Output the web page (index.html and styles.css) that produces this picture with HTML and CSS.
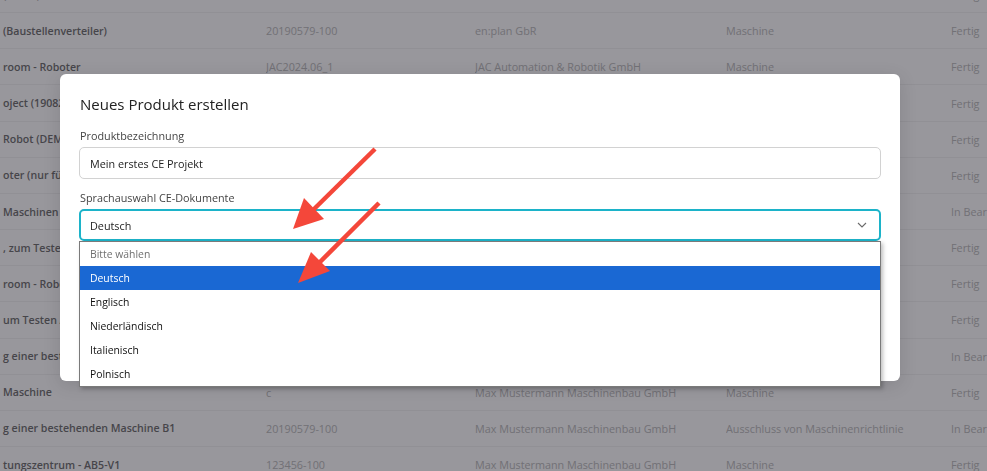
FILE: index.html
```html
<!DOCTYPE html>
<html>
<head>
    <title>Produkte</title>
    <link rel="stylesheet" href="styles.css">
</head>
<body>
    <div class="table">
        <div class="row"><span class="name">(Demo)</span><span></span><span></span><span></span><span>Fertig</span></div>
        <div class="row"><span class="name">(Baustellenverteiler)</span><span>20190579-100</span><span>en:plan GbR</span><span>Maschine</span><span>Fertig</span></div>
        <div class="row"><span class="name">room - Roboter</span><span>JAC2024.06_1</span><span>JAC Automation &amp; Robotik GmbH</span><span>Maschine</span><span>Fertig</span></div>
        <div class="row"><span class="name">oject (19082</span><span></span><span></span><span></span><span>Fertig</span></div>
        <div class="row"><span class="name">Robot (DEMO</span><span></span><span></span><span></span><span>Fertig</span></div>
        <div class="row"><span class="name">oter (nur für</span><span></span><span></span><span></span><span>Fertig</span></div>
        <div class="row"><span class="name"> Maschinen</span><span></span><span></span><span></span><span>In Bearbeitung</span></div>
        <div class="row"><span class="name">, zum Testen</span><span></span><span></span><span></span><span>Fertig</span></div>
        <div class="row"><span class="name">room - Robo</span><span></span><span></span><span></span><span>Fertig</span></div>
        <div class="row"><span class="name">um Testen /</span><span></span><span></span><span></span><span>Fertig</span></div>
        <div class="row"><span class="name">g einer beste</span><span></span><span></span><span></span><span>In Bearbeitung</span></div>
        <div class="row"><span class="name"> Maschine</span><span>c</span><span>Max Mustermann Maschinenbau GmbH</span><span>Maschine</span><span>Fertig</span></div>
        <div class="row"><span class="name">g einer bestehenden Maschine B1</span><span>20190579-100</span><span>Max Mustermann Maschinenbau GmbH</span><span>Ausschluss von Maschinenrichtlinie</span><span>In Bearbeitung</span></div>
        <div class="row"><span class="name">tungszentrum - AB5-V1</span><span>123456-100</span><span>Max Mustermann Maschinenbau GmbH</span><span>Maschine</span><span>Fertig</span></div>
    </div>

    <div class="backdrop"></div>

    <div class="modal-layer">
        <div class="modal">
            <h2 class="modal-title">Neues Produkt erstellen</h2>
            <label class="field-label" for="productName">Produktbezeichnung</label>
            <input class="text-input" id="productName" type="text" value="Mein erstes CE Projekt">
            <label class="field-label">Sprachauswahl CE-Dokumente</label>
            <div class="select-wrap">
                <div class="select">
                    <span>Deutsch</span>
                    <svg class="chevron" width="10" height="6" viewBox="0 0 10 6">
                        <polyline points="1,1 5,5 9,1" fill="none" stroke="#6b6b6b" stroke-width="1.1"/>
                    </svg>
                </div>
                <ul class="options">
                    <li class="placeholder">Bitte wählen</li>
                    <li class="selected">Deutsch</li>
                    <li>Englisch</li>
                    <li>Niederländisch</li>
                    <li>Italienisch</li>
                    <li>Polnisch</li>
                </ul>
            </div>
        </div>
    </div>

    <!-- red hint arrows pointing at the language picker -->
    <svg class="arrows" width="987" height="471" viewBox="0 0 987 471">
        <line x1="375" y1="149" x2="310" y2="213" stroke="#f4473a" stroke-width="4.5"/>
        <polygon points="293,229 304,198 324,219" fill="#f4473a"/>
        <line x1="379" y1="203" x2="316" y2="266" stroke="#f4473a" stroke-width="4.5"/>
        <polygon points="298,283 311,252 330,271" fill="#f4473a"/>
    </svg>
</body>
</html>
```

FILE: styles.css
```css
body {
    margin: 0;
    font-family: "Open Sans", "Noto Sans", sans-serif;
    background-color: #fff;
    overflow: hidden;
    height: 471px;
}
.table {
    margin-top: -23px;
}
.row {
    display: grid;
    grid-template-columns: 266px 209px 251px 225px 1fr;
    align-items: center;
    height: 36.17px;
    box-sizing: border-box;
    border-bottom: 1px solid #f3f3f3;
    font-size: 10.8px;
    color: #bdbdbd;
    white-space: nowrap;
    overflow: hidden;
}
.row span {
    overflow: hidden;
}
.name {
    font-size: 10.6px;
    font-weight: 600;
    color: #737373;
    padding-left: 3px;
}
.backdrop {
    position: fixed;
    inset: 0;
    background-color: rgba(10, 8, 20, 0.42);
}
.modal-layer {
    position: fixed;
    inset: 0;
    padding: 74px 0 0 60px;
}
.modal {
    background-color: #fff;
    width: 840px;
    height: 307px;
    box-sizing: border-box;
    padding: 19px 19px 0 19px;
    border-radius: 6px;
    box-shadow: 0 4px 18px rgba(0, 0, 0, 0.12);
}
.modal-title {
    font-size: 15px;
    font-weight: 400;
    color: #222;
    margin: 0 0 13px 1px;
    line-height: 22px;
}
.field-label {
    display: block;
    font-size: 10.8px;
    color: #444;
    line-height: 16px;
    margin: 0 0 3px 1px;
}
.field-label + .text-input {
    margin-top: 1px;
}
.text-input {
    display: block;
    width: 100%;
    height: 32px;
    box-sizing: border-box;
    border: 1px solid #d2d2d2;
    border-radius: 5px;
    padding: 0 10px;
    font-family: inherit;
    font-size: 10.8px;
    color: #222;
    outline: none;
    margin-bottom: 11px;
}
.select-wrap {
    position: relative;
}
.select {
    display: flex;
    align-items: center;
    justify-content: space-between;
    height: 32px;
    box-sizing: border-box;
    border: 2px solid #1cb3c9;
    border-radius: 5px;
    padding: 0 12px 0 9px;
    font-size: 10.8px;
    color: #222;
}
.options {
    position: absolute;
    top: 32px;
    left: 0;
    right: 0;
    margin: 0;
    padding: 0;
    list-style: none;
    background-color: #fff;
    border: 1px solid #7a7a7a;
    box-shadow: 2px 2px 4px rgba(0, 0, 0, 0.25);
}
.options li {
    height: 24px;
    line-height: 24px;
    padding-left: 10px;
    font-size: 10.4px;
    color: #111;
}
.options .placeholder {
    color: #707070;
}
.options .selected {
    background-color: #1a68d3;
    color: #fff;
}
.arrows {
    position: fixed;
    top: 0;
    left: 0;
}
```
